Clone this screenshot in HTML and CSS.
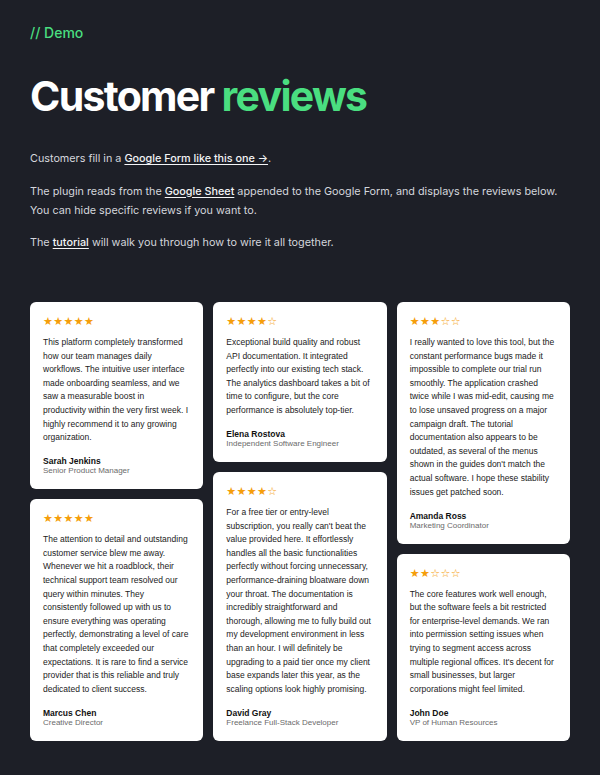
FILE: index.html
```html
<!DOCTYPE html>
<html lang="en">
<head>
<meta charset="utf-8">
<title>Customer reviews</title>
<link rel="stylesheet" href="styles.css">
</head>
<body>
<main class="page">
  <div class="eyebrow">// Demo</div>
  <h1 class="title">Customer <span class="accent">reviews</span></h1>
  <p class="lead">Customers fill in a <a href="#">Google Form like this one →</a>.</p>
  <p class="lead">The plugin reads from the <a href="#">Google Sheet</a> appended to the Google Form, and displays the reviews below.<br>You can hide specific reviews if you want to.</p>
  <p class="lead">The <a href="#">tutorial</a> will walk you through how to wire it all together.</p>

  <section class="reviews">
    <div class="col">
      <article class="card">
        <div class="stars">★★★★★</div>
        <p class="text">This platform completely transformed how our team manages daily workflows. The intuitive user interface made onboarding seamless, and we saw a measurable boost in productivity within the very first week. I highly recommend it to any growing organization.</p>
        <div class="name">Sarah Jenkins</div>
        <div class="role">Senior Product Manager</div>
      </article>
      <article class="card">
        <div class="stars">★★★★★</div>
        <p class="text">The attention to detail and outstanding customer service blew me away. Whenever we hit a roadblock, their technical support team resolved our query within minutes. They consistently followed up with us to ensure everything was operating perfectly, demonstrating a level of care that completely exceeded our expectations. It is rare to find a service provider that is this reliable and truly dedicated to client success.</p>
        <div class="name">Marcus Chen</div>
        <div class="role">Creative Director</div>
      </article>
    </div>
    <div class="col">
      <article class="card">
        <div class="stars">★★★★☆</div>
        <p class="text">Exceptional build quality and robust API documentation. It integrated perfectly into our existing tech stack. The analytics dashboard takes a bit of time to configure, but the core performance is absolutely top-tier.</p>
        <div class="name">Elena Rostova</div>
        <div class="role">Independent Software Engineer</div>
      </article>
      <article class="card">
        <div class="stars">★★★★☆</div>
        <p class="text">For a free tier or entry-level subscription, you really can't beat the value provided here. It effortlessly handles all the basic functionalities perfectly without forcing unnecessary, performance-draining bloatware down your throat. The documentation is incredibly straightforward and thorough, allowing me to fully build out my development environment in less than an hour. I will definitely be upgrading to a paid tier once my client base expands later this year, as the scaling options look highly promising.</p>
        <div class="name">David Gray</div>
        <div class="role">Freelance Full-Stack Developer</div>
      </article>
    </div>
    <div class="col">
      <article class="card">
        <div class="stars">★★★☆☆</div>
        <p class="text">I really wanted to love this tool, but the constant performance bugs made it impossible to complete our trial run smoothly. The application crashed twice while I was mid-edit, causing me to lose unsaved progress on a major campaign draft. The tutorial documentation also appears to be outdated, as several of the menus shown in the guides don't match the actual software. I hope these stability issues get patched soon.</p>
        <div class="name">Amanda Ross</div>
        <div class="role">Marketing Coordinator</div>
      </article>
      <article class="card">
        <div class="stars">★★☆☆☆</div>
        <p class="text">The core features work well enough, but the software feels a bit restricted for enterprise-level demands. We ran into permission setting issues when trying to segment access across multiple regional offices. It's decent for small businesses, but larger corporations might feel limited.</p>
        <div class="name">John Doe</div>
        <div class="role">VP of Human Resources</div>
      </article>
    </div>
  </section>
</main>
</body>
</html>
```

FILE: styles.css
```css
html, body {
  margin: 0;
  padding: 0;
  background: #1d1f27;
}

.page {
  padding: 23px 30px 30px 30px;
  font-family: Inter, "Noto Sans", sans-serif;
  color: #d4d6dc;
}

.eyebrow {
  font-size: 14px;
  line-height: 20px;
  color: #4ade80;
  font-weight: 500;
}

.title {
  margin: 30px 0 29px 0;
  font-size: 41px;
  line-height: 47px;
  font-weight: 700;
  letter-spacing: -1.7px;
  color: #ffffff;
}

.accent {
  color: #4ade80;
}

.lead {
  margin: 0 0 13.5px 0;
  max-width: 560px;
  font-size: 10.8px;
  line-height: 19px;
  color: #d4d6dc;
}

.lead a {
  color: #f3f4f6;
  font-weight: 500;
  text-decoration: underline;
  text-underline-offset: 2px;
}

.reviews {
  margin-top: 50px;
  width: 540px;
  display: flex;
  gap: 10px;
  align-items: flex-start;
}

.col {
  flex: 1 1 0;
  display: flex;
  flex-direction: column;
  gap: 10px;
  min-width: 0;
}

.card {
  background: #ffffff;
  border-radius: 6px;
  padding: 13px 14.1px 13px 13px;
  font-family: "Liberation Sans", Arial, sans-serif;
  color: #222222;
}

.stars {
  font-family: "DejaVu Sans", sans-serif;
  font-size: 11px;
  line-height: 14px;
  letter-spacing: 0.4px;
  color: #f59e0b;
}

.text {
  margin: 7px 0 11.5px 0;
  font-size: 8.5px;
  line-height: 13.6px;
}

.name {
  font-size: 8.5px;
  line-height: 10px;
  font-weight: 700;
  color: #111111;
}

.role {
  font-size: 8px;
  line-height: 10px;
  color: #6b6b6b;
}
```
